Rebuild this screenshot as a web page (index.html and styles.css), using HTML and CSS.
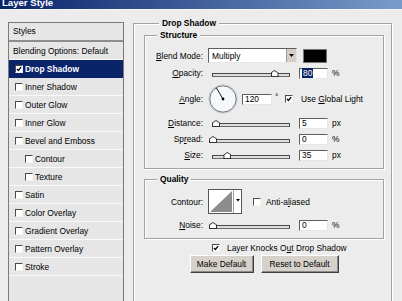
FILE: index.html
```html
<!DOCTYPE html>
<html lang="en">
<head>
    <meta charset="UTF-8">
    <meta name="viewport" content="width=device-width, initial-scale=1.0">
    <title>Layer Style</title>
    <link rel="stylesheet" href="styles.css">
</head>
<body>
    <div class="titlebar"><span>Layer Style</span></div>

    <div class="dialog">
        <div class="style-list">
            <div class="list-head">Styles</div>
            <div class="list-item plain">Blending Options: Default</div>
            <div class="list-item selected">
                <span class="check"><svg viewBox="0 0 8 8"><path d="M1.2 3.8 L3.2 6 L6.8 1.4" /></svg></span>Drop Shadow
            </div>
            <div class="list-item"><span class="check"></span>Inner Shadow</div>
            <div class="list-item"><span class="check"></span>Outer Glow</div>
            <div class="list-item"><span class="check"></span>Inner Glow</div>
            <div class="list-item"><span class="check"></span>Bevel and Emboss</div>
            <div class="list-item sub"><span class="check"></span>Contour</div>
            <div class="list-item sub"><span class="check"></span>Texture</div>
            <div class="list-item"><span class="check"></span>Satin</div>
            <div class="list-item"><span class="check"></span>Color Overlay</div>
            <div class="list-item"><span class="check"></span>Gradient Overlay</div>
            <div class="list-item"><span class="check"></span>Pattern Overlay</div>
            <div class="list-item"><span class="check"></span>Stroke</div>
        </div>

        <fieldset class="group outer">
            <legend>Drop Shadow</legend>

            <fieldset class="group structure">
                <legend>Structure</legend>

                <div class="row blend-row">
                    <label class="field-label"><u>B</u>lend Mode:</label>
                    <div class="select">
                        <span>Multiply</span>
                        <span class="drop-btn"><svg width="5" height="3" viewBox="0 0 5 3"><path d="M0 0 H5 L2.5 3 Z" /></svg></span>
                    </div>
                    <span class="swatch"></span>
                </div>

                <div class="row opacity-row">
                    <label class="field-label"><u>O</u>pacity:</label>
                    <div class="slider"><span class="thumb" style="left: 81%"></span></div>
                    <div class="num"><span class="highlight">80</span></div>
                    <span class="unit">%</span>
                </div>

                <div class="row angle-row">
                    <label class="field-label"><u>A</u>ngle:</label>
                    <svg class="dial" width="30" height="30" viewBox="0 0 30 30">
                        <circle cx="15" cy="15" r="14.3" fill="#f6f7f9" stroke="#c9cdd3" />
                        <circle cx="15" cy="15" r="13.2" fill="none" stroke="#6f757c" />
                        <line x1="15" y1="15" x2="8.2" y2="3.6" stroke="#1a1a1a" stroke-width="1" />
                        <circle cx="15" cy="15" r="1.4" fill="#000" />
                    </svg>
                    <div class="num wide">120</div>
                    <span class="deg">°</span>
                    <span class="check on"><svg viewBox="0 0 8 8"><path d="M1.2 3.8 L3.2 6 L6.8 1.4" /></svg></span>
                    <span class="check-text">Use <u>G</u>lobal Light</span>
                </div>

                <div class="row">
                    <label class="field-label"><u>D</u>istance:</label>
                    <div class="slider"><span class="thumb" style="left: 4%"></span></div>
                    <div class="num">5</div>
                    <span class="unit">px</span>
                </div>

                <div class="row">
                    <label class="field-label">Sp<u>r</u>ead:</label>
                    <div class="slider"><span class="thumb" style="left: 0%"></span></div>
                    <div class="num">0</div>
                    <span class="unit">%</span>
                </div>

                <div class="row">
                    <label class="field-label"><u>S</u>ize:</label>
                    <div class="slider"><span class="thumb" style="left: 19%"></span></div>
                    <div class="num">35</div>
                    <span class="unit">px</span>
                </div>
            </fieldset>

            <fieldset class="group quality">
                <legend>Quality</legend>

                <div class="row contour-row">
                    <label class="field-label">Contour:</label>
                    <svg class="contour" width="34" height="25" viewBox="0 0 34 25">
                        <rect x="0.5" y="0.5" width="33" height="24" fill="#fff" stroke="#555" />
                        <polygon points="2,23 24,2 24,23" fill="#8c8c8c" />
                        <line x1="25.5" y1="1" x2="25.5" y2="24" stroke="#a0a0a0" />
                        <polygon points="28,10 32,10 30,12.5" fill="#000" />
                    </svg>
                    <span class="check aa"></span>
                    <span class="check-text aa-text">Anti-a<u>l</u>iased</span>
                </div>

                <div class="row noise-row">
                    <label class="field-label"><u>N</u>oise:</label>
                    <div class="slider"><span class="thumb" style="left: 0%"></span></div>
                    <div class="num">0</div>
                    <span class="unit">%</span>
                </div>
            </fieldset>

            <div class="knockout">
                <span class="check on"><svg viewBox="0 0 8 8"><path d="M1.2 3.8 L3.2 6 L6.8 1.4" /></svg></span>
                <span class="check-text">Layer Knocks O<u>u</u>t Drop Shadow</span>
            </div>

            <div class="buttons">
                <button class="btn make">Make Default</button>
                <button class="btn reset">Reset to Default</button>
            </div>
        </fieldset>
    </div>
</body>
</html>
```

FILE: styles.css
```css
/* Layer Style dialog */
* {
    box-sizing: border-box;
}

body {
    margin: 0;
    width: 402px;
    height: 301px;
    overflow: hidden;
    background-color: #ececec;
    font-family: "Liberation Sans", Arial, sans-serif;
    font-size: 8.4px;
    color: #000;
}

u {
    text-decoration: underline;
    text-underline-offset: 1px;
}

.titlebar {
    height: 10px;
    overflow: hidden;
    background: linear-gradient(90deg, #0a246a 0%, #a6caf0 140%);
    border-bottom: 1px solid #f6f6f6;
}

.titlebar span {
    display: block;
    margin: -3px 0 0 2px;
    color: #fff;
    font-weight: bold;
    font-size: 9.6px;
    line-height: 12px;
}

.dialog {
    display: flex;
    align-items: flex-start;
    padding: 12px 0 0 8px;
}

/* left list of styles */
.style-list {
    flex: none;
    width: 116px;
    height: 300px;
    border: 1px solid #7a7a7a;
    background-color: #e6e6e6;
}

.list-head {
    height: 19px;
    padding-left: 4px;
    line-height: 17px;
    border-bottom: 2px solid #8e8e8e;
}

.list-item {
    display: flex;
    align-items: center;
    height: 18px;
    padding-left: 6px;
    border-bottom: 1px solid #fafafa;
}

.list-item.plain {
    padding-left: 4px;
}

.list-item.sub {
    padding-left: 16px;
}

.list-item.selected {
    background-color: #0a246a;
    border-bottom-color: #0a246a;
    color: #fff;
    font-weight: bold;
}

.check {
    flex: none;
    display: inline-block;
    width: 8px;
    height: 8px;
    margin-right: 2px;
    background-color: #fff;
    border: 1px solid;
    border-color: #4a4a4a #f4f4f4 #f4f4f4 #4a4a4a;
}

.check svg {
    display: block;
    width: 6px;
    height: 6px;
}

.check svg path {
    fill: none;
    stroke: #000;
    stroke-width: 1.7;
}

/* group boxes */
.group {
    margin: 0;
    min-width: 0;
    border: 1px solid #a2a2a2;
    box-shadow: 1px 1px 0 #fff, inset 1px 1px 0 #fff;
}

.group legend {
    padding: 0 3px;
    font-weight: bold;
    line-height: 11px;
    background-color: #ececec;
}

.outer {
    flex: none;
    width: 259px;
    height: 300px;
    margin: -4px 0 0 9px;
    padding: 0 7px 0 10px;
}

.outer > legend {
    margin-left: 15px;
}

.structure {
    margin-top: 1px;
    padding: 7px 0 6px 0;
}

.quality {
    margin-top: 5px;
    padding: 4px 0 6px 0;
}

.structure legend,
.quality legend {
    margin-left: 12px;
}

.row {
    display: flex;
    align-items: center;
    height: 14px;
    margin-top: 2px;
}

.blend-row {
    height: 15px;
    margin-top: 0;
}

.opacity-row {
    margin-top: 3px;
}

.angle-row {
    height: 30px;
    margin-top: 4px;
}

.contour-row {
    height: 25px;
    margin-top: 0;
}

.noise-row {
    margin-top: 4px;
}

.field-label {
    flex: none;
    width: 58px;
    text-align: right;
}

.select {
    display: flex;
    align-items: center;
    width: 89px;
    height: 15px;
    margin-left: 5px;
    padding-left: 3px;
    background-color: #fff;
    border: 1px solid;
    border-color: #5e5e5e #e6e6e6 #e6e6e6 #5e5e5e;
}

.drop-btn {
    display: flex;
    align-items: center;
    justify-content: center;
    width: 10px;
    height: 13px;
    margin-left: auto;
    background-color: #d4d0c8;
    border-left: 1px solid #9a9a9a;
}

.drop-btn svg path {
    fill: #000;
}

.swatch {
    width: 24px;
    height: 14px;
    margin-left: 6px;
    background-color: #000;
    border: 1px solid #777;
}

.slider {
    position: relative;
    flex: none;
    width: 78px;
    height: 4px;
    margin: 4px 0 0 9px;
    background-color: #dcdcdc;
    border: 1px solid #4a4a4a;
    border-bottom-color: #6a6a6a;
}

.thumb {
    position: absolute;
    bottom: -1px;
    width: 8px;
    height: 7px;
    transform: translateX(-50%);
    background-color: #333;
    clip-path: polygon(0 40%, 50% 0, 100% 40%, 100% 100%, 0 100%);
}

.thumb::after {
    content: "";
    position: absolute;
    left: 1px;
    top: 1px;
    width: 6px;
    height: 5px;
    background-color: #fff;
    clip-path: polygon(0 42%, 50% 0, 100% 42%, 100% 100%, 0 100%);
}

.num {
    flex: none;
    width: 29px;
    height: 11px;
    margin-left: 9px;
    padding-left: 2px;
    line-height: 9px;
    background-color: #fff;
    border: 1px solid;
    border-color: #5e5e5e #e6e6e6 #e6e6e6 #5e5e5e;
}

.num.wide {
    width: 30px;
    margin-left: 4px;
}

.highlight {
    padding: 0 1px;
    background-color: #0a246a;
    color: #fff;
}

.unit {
    margin-left: 4px;
}

.dial {
    flex: none;
    margin-left: 5px;
}

.deg {
    width: 6px;
    margin-left: 3px;
    align-self: flex-start;
    margin-top: 8px;
}

.angle-row .check {
    margin-left: 4px;
}

.check-text {
    margin-left: 6px;
}

.contour {
    flex: none;
    margin-left: 5px;
}

.check.aa {
    margin-left: 11px;
}

.aa-text {
    margin-left: 3px;
}

.knockout {
    display: flex;
    align-items: center;
    height: 12px;
    margin-top: 3px;
    padding-left: 68px;
}

.knockout .check-text {
    margin-left: 5px;
}

.buttons {
    display: flex;
    justify-content: center;
    gap: 7px;
    margin-top: 1px;
}

.btn {
    height: 18px;
    padding: 0;
    font-family: inherit;
    font-size: 8.4px;
    color: #000;
    background-color: #d6d2cb;
    border: 1px solid;
    border-color: #fff #404040 #404040 #fff;
    box-shadow: inset -1px -1px 0 #8a8a8a;
}

.btn.make {
    width: 64px;
}

.btn.reset {
    width: 78px;
}
```
